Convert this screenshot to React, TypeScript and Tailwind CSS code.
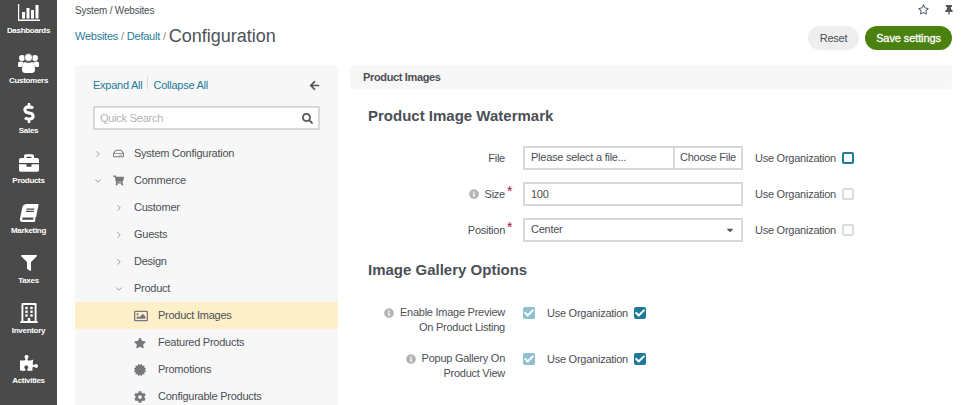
import React from "react";
import { ChevronRight, ChevronDown } from "lucide-react";
import {
  FaDollarSign, FaBriefcase, FaBook, FaFilter, FaRegBuilding, FaPuzzlePiece,
  FaRegHdd, FaShoppingCart, FaRegImage, FaStar, FaCertificate, FaCog, FaInfoCircle,
  FaSearch, FaArrowLeft, FaThumbtack, FaRegStar, FaCheck, FaCaretDown,
} from "react-icons/fa";

function ChartIcon() {
  return (
    <svg width="22" height="17" viewBox="0 0 22 17" fill="white">
      <rect x="0" y="0" width="1.2" height="17" />
      <rect x="0" y="15.5" width="22" height="1.5" />
      <rect x="4" y="8" width="3" height="6.5" />
      <rect x="8.5" y="4" width="3" height="10.5" />
      <rect x="13" y="6" width="3" height="8.5" />
      <rect x="17.5" y="1" width="3" height="13.5" />
    </svg>
  );
}

function GroupIcon() {
  return (
    <svg width="21" height="20" viewBox="0 0 21 20" fill="white">
      <circle cx="4" cy="5" r="3" />
      <circle cx="17" cy="5" r="3" />
      <path d="M0 10.5C0 9 1.5 8.5 3 8.5L5.5 9C5.5 11 4.5 12.5 3.5 14H1C.3 14 0 13.5 0 13Z" />
      <path d="M21 10.5C21 9 19.5 8.5 18 8.5L15.5 9C15.5 11 16.5 12.5 17.5 14H20C20.7 14 21 13.5 21 13Z" />
      <circle cx="10.5" cy="4.5" r="4" stroke="#4a4a4a" strokeWidth="0.8" />
      <path d="M6 9.5C7 9 8.5 10 10.5 10S14 9 15 9.5C16.5 10.5 17 14 17 17C17 19 15.5 20 14 20H7C5.5 20 4 19 4 17C4 14 4.5 10.5 6 9.5Z" />
    </svg>
  );
}

const nav = [
  { label: "Dashboards", icon: <ChartIcon /> },
  { label: "Customers", icon: <GroupIcon /> },
  { label: "Sales", icon: <FaDollarSign size={20} /> },
  { label: "Products", icon: <FaBriefcase size={20} /> },
  { label: "Marketing", icon: <FaBook size={18} className="-skew-x-12" /> },
  { label: "Taxes", icon: <FaFilter size={16} /> },
  { label: "Inventory", icon: <FaRegBuilding size={20} /> },
  { label: "Activities", icon: <FaPuzzlePiece size={18} /> },
];

function Box({ state }: { state: "focus" | "off" | "on" | "dim" }) {
  const cls =
    state === "focus"
      ? "border-2 border-[#1f7a99] bg-white"
      : state === "off"
        ? "border-2 border-[#dcdcdc] bg-white"
        : state === "on"
          ? "bg-[#1f7a99]"
          : "bg-[#8fc0d0]";
  return (
    <span className={`flex h-3 w-3 shrink-0 items-center justify-center rounded-[2px] text-white ${cls}`}>
      {(state === "on" || state === "dim") && <FaCheck size={10} />}
    </span>
  );
}

function UseOrg({ state }: { state: "focus" | "off" | "on" }) {
  return (
    <div className="flex items-center gap-[6px]">
      <span>Use Organization</span>
      <Box state={state} />
    </div>
  );
}

function Row({ depth, toggle, icon, label, active }: { depth: number; toggle?: "r" | "d"; icon?: React.ReactNode; label: string; active?: boolean }) {
  const pad = depth === 0 ? "pl-[18px]" : depth === 1 ? "pl-[39px]" : "pl-[59px]";
  return (
    <div className={`flex h-[27px] items-center ${pad} ${active ? "bg-[#fdf0c8]" : ""}`}>
      {toggle && (
        <span className="w-[20px] text-[#8a8a8a]">
          {toggle === "r" ? <ChevronRight size={10} /> : <ChevronDown size={10} />}
        </span>
      )}
      {icon && <span className={`flex items-center text-[#77777c] ${depth === 0 ? "w-[21px]" : "w-[24px]"}`}>{icon}</span>}
      <span>{label}</span>
    </div>
  );
}

function FieldLabel({ info, req, children }: { info?: boolean; req?: boolean; children: React.ReactNode }) {
  return (
    <div className="flex w-[137px] items-center justify-end gap-[6px]">
      {info && <FaInfoCircle size={10} className="text-[#b5b5b5]" />}
      <span className="relative">
        {children}
        {req && <span className="absolute left-full top-[-2px] ml-[2px] text-[14px] leading-none text-[#a8123e]">*</span>}
      </span>
    </div>
  );
}

function GalleryRow({ lines }: { lines: [string, string] }) {
  return (
    <div className="flex items-start">
      <div className="w-[137px] text-right leading-[15px]">
        <div className="flex items-center justify-end gap-[6px]">
          <FaInfoCircle size={10} className="text-[#b5b5b5]" />
          <span>{lines[0]}</span>
        </div>
        <div>{lines[1]}</div>
      </div>
      <div className="ml-[18px] flex items-center">
        <Box state="dim" />
        <div className="ml-3">
          <UseOrg state="on" />
        </div>
      </div>
    </div>
  );
}

export default function App() {
  return (
    <div className="flex h-[405px] w-[967px] overflow-hidden bg-white font-['Liberation_Sans',Arial,sans-serif] text-[11px] tracking-[-0.25px] text-[#4b4f55]">
      <aside className="flex h-full w-[57px] shrink-0 flex-col bg-[#4a4a4a] text-white">
        {nav.map((n) => (
          <div key={n.label} className="flex h-[50px] shrink-0 flex-col items-center justify-start">
            <div className="flex h-[26px] items-center justify-center pb-px">{n.icon}</div>
            <div className="text-[8px] font-bold leading-[10px] tracking-[-0.3px]">{n.label}</div>
          </div>
        ))}
      </aside>

      <main className="min-w-0 flex-1 pl-[18px] pr-[15px]">
        <div className="flex h-[20px] items-center justify-between text-[10px] tracking-[-0.2px]">
          <span>System / Websites</span>
          <div className="-mr-[2px] flex items-center gap-[15px] pb-px text-[#44546a]">
            <FaRegStar size={11} />
            <FaThumbtack size={10} className="text-[#555]" />
          </div>
        </div>

        <div className="flex h-[45px] items-start justify-between">
          <div className="flex items-center pt-[4px] text-[#888]">
            <span className="text-[#1f7a99]">Websites</span>
            <span className="mx-[3px]">/</span>
            <span className="text-[#1f7a99]">Default</span>
            <span className="mx-[3px]">/</span>
            <span className="text-[18px] leading-[24px] tracking-normal text-[#4c5258]">Configuration</span>
          </div>
          <div className="flex gap-[6px] pt-[6px]">
            <button className="h-6 w-[51px] rounded-full bg-[#eeeeee]">Reset</button>
            <button className="h-6 w-[87px] rounded-full bg-[#4b820f] tracking-[-0.1px] text-white [-webkit-text-stroke:0.3px_white]">Save settings</button>
          </div>
        </div>

        <div className="flex gap-3">
          <section className="h-[340px] w-[263px] shrink-0 rounded-t bg-[#f7f7f7]">
            <div className="flex items-center justify-between px-[18px] pt-[12px] leading-[16px]">
              <div className="flex items-center text-[#1f7a99]">
                <span>Expand All</span>
                <span className="mx-[5px] -mt-[4px] h-[12px] w-px bg-[#d9d9d9]" />
                <span>Collapse All</span>
              </div>
              <FaArrowLeft size={11} className="text-[#555]" />
            </div>
            <div className="mx-[18px] mt-[13px] flex h-6 items-center justify-between border-2 border-[#d8d8d8] bg-white pl-[5px] pr-[5px]">
              <span className="text-[#b3b3b3]">Quick Search</span>
              <FaSearch size={11} className="text-[#555]" />
            </div>
            <div className="mt-[10px]">
              <Row depth={0} toggle="r" icon={<FaRegHdd size={11} />} label="System Configuration" />
              <Row depth={0} toggle="d" icon={<FaShoppingCart size={11} />} label="Commerce" />
              <Row depth={1} toggle="r" label="Customer" />
              <Row depth={1} toggle="r" label="Guests" />
              <Row depth={1} toggle="r" label="Design" />
              <Row depth={1} toggle="d" label="Product" />
              <Row depth={2} active icon={<FaRegImage size={14} />} label="Product Images" />
              <Row depth={2} icon={<FaStar size={12} />} label="Featured Products" />
              <Row depth={2} icon={<FaCertificate size={12} />} label="Promotions" />
              <Row depth={2} icon={<FaCog size={12} />} label="Configurable Products" />
            </div>
          </section>

          <section className="min-w-0 flex-1">
            <div className="flex h-6 items-center rounded bg-[#f7f7f7] pl-[13px] font-bold tracking-[-0.35px]">Product Images</div>
            <div className="pl-[18px]">
              <h2 className="mt-[17px] text-[15px] font-bold leading-[20px] tracking-normal">Product Image Watermark</h2>
              <div className="mt-[20px] flex flex-col gap-3">
                <div className="flex items-center">
                  <FieldLabel>File</FieldLabel>
                  <div className="ml-[18px] flex h-6 w-[220px] border-2 border-[#d8d8d8]">
                    <span className="flex flex-1 items-center pb-px pl-[6px]">Please select a file...</span>
                    <span className="flex items-center border-l-2 border-[#d8d8d8] px-[5px] pb-px">Choose File</span>
                  </div>
                  <div className="ml-3"><UseOrg state="focus" /></div>
                </div>
                <div className="flex items-center">
                  <FieldLabel info req>Size</FieldLabel>
                  <div className="ml-[18px] flex h-6 w-[220px] items-center border-2 border-[#d8d8d8] pl-[6px]">100</div>
                  <div className="ml-3"><UseOrg state="off" /></div>
                </div>
                <div className="flex items-center">
                  <FieldLabel req>Position</FieldLabel>
                  <div className="ml-[18px] flex h-6 w-[220px] items-center justify-between border-2 border-[#d8d8d8] pb-px pl-[6px] pr-[6px]">
                    <span>Center</span>
                    <FaCaretDown size={10} className="text-[#555]" />
                  </div>
                  <div className="ml-3"><UseOrg state="off" /></div>
                </div>
              </div>
              <h2 className="mt-[18px] text-[15px] font-bold leading-[20px] tracking-normal">Image Gallery Options</h2>
              <div className="mt-[25px] flex flex-col gap-4">
                <GalleryRow lines={["Enable Image Preview", "On Product Listing"]} />
                <GalleryRow lines={["Popup Gallery On", "Product View"]} />
              </div>
            </div>
          </section>
        </div>
      </main>
    </div>
  );
}
